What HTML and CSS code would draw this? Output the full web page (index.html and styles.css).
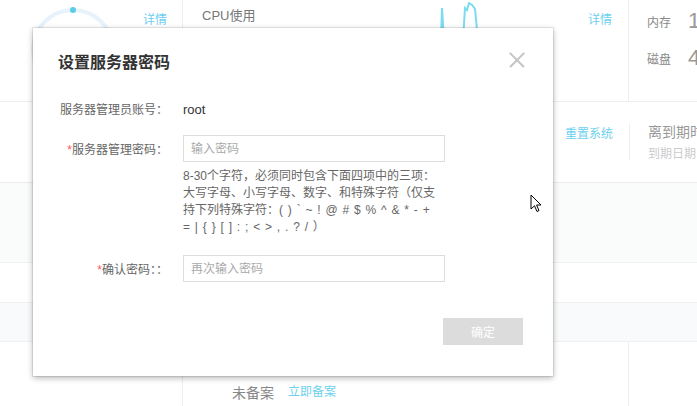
FILE: index.html
```html
<!DOCTYPE html>
<html lang="zh-CN">

<head>
    <meta charset="UTF-8">
    <meta name="viewport" content="width=device-width, initial-scale=1.0">
    <title>设置服务器密码</title>
    <link rel="stylesheet" href="styles.css">
</head>

<body>
    <div class="page">
        <!-- Top monitoring row -->
        <div class="row-top">
            <div class="cell-a">
                <svg class="gauge" width="143" height="101" viewBox="0 0 143 101">
                    <circle cx="73" cy="50" r="40" fill="none" stroke="#e8f2fa" stroke-width="4" />
                    <circle cx="73" cy="10" r="3" fill="#5ccbe8" />
                </svg>
                <a class="link link-top">详情</a>
            </div>
            <div class="cell-b">
                <div class="cell-title">CPU使用</div>
                <svg class="chart" width="320" height="101" viewBox="0 0 320 101">
                    <polyline points="186,40 187,8 189,40" fill="none" stroke="#7adcef" stroke-width="2" />
                    <polyline points="208,40 210,8 212,10 214,3 217,5 220,9 223,40" fill="none" stroke="#7adcef" stroke-width="2" />
                </svg>
                <a class="link link-top link-right">详情</a>
            </div>
            <div class="cell-c">
                <div class="stat"><span class="stat-label">内存</span><span class="stat-num">1</span></div>
                <div class="stat"><span class="stat-label">磁盘</span><span class="stat-num">4</span></div>
            </div>
        </div>

        <!-- Second row -->
        <div class="row-second">
            <div class="second-main"><a class="link">重置系统</a></div>
            <div class="second-side">
                <div class="expire">离到期时间</div>
                <div class="expire-date">到期日期</div>
            </div>
        </div>

        <div class="row-band"></div>
        <div class="row-plain"></div>
        <div class="row-head"></div>

        <div class="row-bottom">
            <div class="cell-a"></div>
            <div class="cell-b">
                <span class="record">未备案</span>
                <a class="link">立即备案</a>
            </div>
            <div class="cell-c"></div>
        </div>

        <!-- Dialog -->
        <div class="modal">
            <h2 class="modal-title">设置服务器密码</h2>
            <span class="modal-close"></span>

            <div class="form-row row-account">
                <div class="form-label">服务器管理员账号：</div>
                <div class="form-value">root</div>
            </div>

            <div class="form-row row-pass">
                <div class="form-label"><span class="req">*</span>服务器管理密码：</div>
                <input class="form-input" type="password" placeholder="输入密码">
            </div>
            <div class="form-help">
                8-30个字符，必须同时包含下面四项中的三项：<br>
                大写字母、小写字母、数字、和特殊字符（仅支<br>
                持下列特殊字符：( ) ` ~ ! @ # $ % ^ &amp; * - +<br>
                = | { } [ ] : ; &lt; &gt; , . ? / ）
            </div>

            <div class="form-row row-confirm">
                <div class="form-label"><span class="req">*</span>确认密码：：</div>
                <input class="form-input" type="password" placeholder="再次输入密码">
            </div>

            <div class="modal-footer">
                <button class="btn-ok" disabled>确定</button>
            </div>
        </div>

        <!-- Mouse pointer -->
        <svg class="pointer" width="13" height="19" viewBox="0 0 13 19">
            <path d="M1 1 L1 15 L4.5 11.8 L7 17.5 L9 16.6 L6.6 11 L11 11 Z" fill="#fff" stroke="#000" stroke-width="1" stroke-linejoin="round" />
        </svg>
    </div>
</body>

</html>
```

FILE: styles.css
```css
* {
    box-sizing: border-box;
}

body {
    margin: 0;
    font-family: "Liberation Sans", "Noto Sans CJK SC", sans-serif;
    background: #fff;
    color: #666;
}

.page {
    position: relative;
    width: 697px;
    height: 406px;
    overflow: hidden;
}

.link {
    color: #6dd0ee;
    font-size: 12px;
    line-height: 16px;
    text-decoration: none;
    white-space: nowrap;
}

/* top row */
.row-top {
    display: flex;
    height: 102px;
    border-bottom: 1px solid #eee;
}

.cell-a {
    display: flex;
    width: 183px;
    border-right: 1px solid #eee;
    flex: none;
}

.cell-b {
    display: flex;
    width: 446px;
    padding: 0 16px 0 19px;
    border-right: 1px solid #eee;
    flex: none;
}

.cell-c {
    flex: 1;
    padding: 12px 0 0 18px;
    white-space: nowrap;
}

.gauge,
.chart {
    flex: none;
}

.link-top {
    margin-top: 12px;
}

.link-right {
    margin-left: auto;
}

.cell-title {
    margin-top: 8px;
    font-size: 13px;
    line-height: 16px;
    color: #777;
    white-space: nowrap;
}

.stat {
    display: flex;
    align-items: center;
    height: 18px;
    margin-bottom: 19px;
}

.stat-label {
    width: 41px;
    flex: none;
    font-size: 12px;
    color: #888;
}

.stat-num {
    font-size: 22px;
    color: #999;
}

/* second row */
.row-second {
    display: flex;
    height: 81px;
    border-bottom: 1px solid #ebebeb;
}

.second-main {
    width: 629px;
    flex: none;
    padding: 22px 16px 0 0;
    text-align: right;
}

.second-side {
    margin-top: 21px;
    height: 37px;
    padding-left: 18px;
    border-left: 1px solid #eee;
    white-space: nowrap;
}

.expire {
    font-size: 14px;
    line-height: 18px;
    color: #999;
}

.expire-date {
    margin-top: 5px;
    font-size: 12px;
    line-height: 16px;
    color: #ccc;
}

.row-band {
    height: 80px;
    background: #fafbfb;
    border-bottom: 1px solid #f0f0f0;
}

.row-plain {
    height: 40px;
    border-bottom: 1px solid #f0f0f0;
}

.row-head {
    height: 39px;
    background: #f9fafc;
    border-bottom: 1px solid #f0f0f0;
}

.row-bottom {
    display: flex;
    height: 64px;
}

.row-bottom .cell-b {
    padding: 42px 0 0 49px;
    line-height: 18px;
}

.record {
    font-size: 14px;
    color: #888;
    margin-right: 14px;
}

/* dialog */
.modal {
    position: absolute;
    left: 33px;
    top: 28px;
    width: 520px;
    height: 348px;
    background: #fff;
    box-shadow: 0 0 0 1px rgba(0, 0, 0, 0.08), 0 2px 6px rgba(0, 0, 0, 0.3);
    padding-top: 24px;
}

.modal-title {
    margin: 0;
    padding-left: 25px;
    font-size: 16px;
    line-height: 22px;
    font-weight: bold;
    color: #333;
}

.modal-close {
    position: absolute;
    right: 28px;
    top: 24px;
    width: 16px;
    height: 16px;
}

.modal-close::before,
.modal-close::after {
    content: "";
    position: absolute;
    left: -2px;
    top: 7px;
    width: 20px;
    height: 1.5px;
    background: #c4c4c4;
    transform: rotate(45deg);
}

.modal-close::after {
    transform: rotate(-45deg);
}

.form-row {
    display: flex;
    align-items: center;
}

.form-label {
    width: 135px;
    margin-right: 15px;
    text-align: right;
    font-size: 12px;
    color: #666;
    white-space: nowrap;
}

.req {
    color: #f55;
}

.form-value {
    font-size: 13px;
    color: #333;
}

.row-account {
    margin-top: 26px;
    line-height: 20px;
}

.row-pass {
    margin-top: 15px;
}

.row-confirm {
    margin-top: 19px;
}

.form-input {
    width: 262px;
    height: 27px;
    padding: 0 7px;
    border: 1px solid #ddd;
    font-family: inherit;
    font-size: 12px;
    outline: none;
}

.form-input::placeholder {
    color: #aaa;
}

.form-help {
    margin: 6px 0 0 150px;
    font-size: 12px;
    line-height: 17px;
    color: #666;
    white-space: nowrap;
    word-spacing: 1.5px;
}

.modal-footer {
    display: flex;
    justify-content: flex-end;
    margin-top: 36px;
    padding-right: 30px;
}

.btn-ok {
    width: 80px;
    height: 27px;
    border: none;
    background: #dcdcdc;
    color: #fff;
    font-family: inherit;
    font-size: 12px;
}

.pointer {
    position: absolute;
    left: 530px;
    top: 194px;
}
```
